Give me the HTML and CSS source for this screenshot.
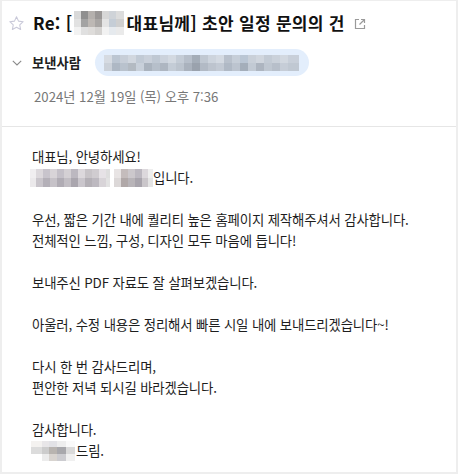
FILE: index.html
```html
<!DOCTYPE html>
<html lang="ko">
<head>
<meta charset="utf-8">
<link rel="stylesheet" href="styles.css">
</head>
<body>
<div class="frame">
  <header class="header">
    <div class="title-row">
      <svg class="star" width="17" height="17" viewBox="0 0 24 24"><path d="M12 2.6l2.85 6.05 6.6.8-4.88 4.55 1.27 6.55L12 17.3l-5.840 3.25 1.27-6.55L2.55 9.45l6.6-.8z" fill="none" stroke="#c9c9d9" stroke-width="1.5" stroke-linejoin="round"/></svg>
      <h1 class="title">Re: [<span class="blur blur-title"></span>대표님께] 초안 일정 문의의 건</h1>
      <svg class="ext" width="12" height="12" viewBox="0 0 12 12"><path d="M5 1.5H1.5v9h9V7" fill="none" stroke="#9a9a9a" stroke-width="1.2"/><path d="M7 1.5h3.5V5M10.5 1.5L5.5 6.5" fill="none" stroke="#9a9a9a" stroke-width="1.2"/></svg>
    </div>
    <div class="sender-row">
      <svg class="chev" width="10" height="6" viewBox="0 0 10 6"><path d="M0.8 0.8L5 5 9.2 0.8" fill="none" stroke="#8a8a8a" stroke-width="1.1"/></svg>
      <span class="sender-label">보낸사람</span>
      <span class="pill"><span class="blur blur-pill"></span></span>
    </div>
    <div class="date">2024년 12월 19일 (목) 오후 7:36</div>
  </header>
  <main class="body">
    <p>대표님, 안녕하세요!<br><span class="blur blur-name"></span>입니다.</p>
    <p>우선, 짧은 기간 내에 퀄리티 높은 홈페이지 제작해주셔서 감사합니다.<br>전체적인 느낌, 구성, 디자인 모두 마음에 듭니다!</p>
    <p>보내주신 PDF 자료도 잘 살펴보겠습니다.</p>
    <p>아울러, 수정 내용은 정리해서 빠른 시일 내에 보내드리겠습니다~!</p>
    <p>다시 한 번 감사드리며,<br>편안한 저녁 되시길 바라겠습니다.</p>
    <p>감사합니다.<br><span class="blur blur-sign"></span>드림.</p>
  </main>
</div>
</body>
</html>
```
FILE: styles.css
```css
* { box-sizing: border-box; }
html, body { margin: 0; padding: 0; background: #fff; }
body {
  font-family: "Noto Sans CJK KR", "Noto Sans", sans-serif;
  color: #1e1e1e;
}
.frame {
  width: 458px;
  height: 474px;
  border: 2px solid #eeeeee;
  border-top-width: 1px;
  overflow: hidden;
}
.header {
  padding: 7px 0 0 6px;
  height: 126px;
  border-bottom: 1px solid #e6e6e6;
}
.title-row {
  display: flex;
  align-items: center;
  height: 30px;
}
.star { flex: none; margin-right: 8px; margin-top: 1px; }
.title {
  margin: 0;
  font-size: 17px;
  font-weight: 700;
  color: #111;
  line-height: 30px;
  white-space: nowrap;
  letter-spacing: 0.3px;
  display: flex;
  align-items: center;
}
.ext { flex: none; margin-left: 9px; margin-top: 1px; }
.sender-row {
  display: flex;
  align-items: center;
  margin-top: 11px;
  height: 27px;
}
.chev { flex: none; margin-left: 4px; margin-right: 10px; }
.sender-label {
  font-size: 13.3px;
  font-weight: 700;
  color: #1e1e1e;
}
.pill {
  margin-left: 14px;
  height: 27px;
  width: 214px;
  border-radius: 14px;
  background: #e3eefc;
  display: flex;
  align-items: center;
  padding-left: 9px;
}
.date {
  margin-top: 12px;
  margin-left: 26px;
  font-size: 13.2px;
  color: #777;
  line-height: 18px;
}
.body {
  padding: 19px 0 0 30px;
  font-size: 13.4px;
  line-height: 21px;
  letter-spacing: -0.15px;
}
.body p { margin: 0 0 21px 0; }
.blur { display: inline-block; vertical-align: middle; }
.blur-title {
  width: 50px;
  height: 24px;
  margin: 0 3px 0 1px;
  background:
    linear-gradient(90deg, #d9d9d9 0 7px, #8f8f8f 7px 14px, #b4b0ad 14px 21px, #9a9796 21px 28px, #d7d7d7 28px 35px, #cfd3d8 35px 42px, #dcdcdc 42px 50px) 0 0 / 100% 8px no-repeat,
    linear-gradient(90deg, #e2e2e2 0 7px, #a3a3a3 7px 14px, #bdb8b4 14px 21px, #a9a6a4 21px 28px, #e4e4e4 28px 35px, #c5cdd6 35px 42px, #cfcfcf 42px 50px) 0 8px / 100% 8px no-repeat,
    linear-gradient(90deg, #f2f2f2 0 7px, #e0e0e0 7px 14px, #dedcda 14px 21px, #d4d2d0 21px 28px, #f2f2f2 28px 35px, #e6eaee 35px 42px, #eaeaea 42px 50px) 0 16px / 100% 8px no-repeat;
}
.blur-pill {
  width: 195px;
  height: 16px;
  background:
    linear-gradient(90deg, #d6dbe2 0 8px, #bcc6d2 8px 16px, #c7ced8 16px 24px, #d1d7df 24px 32px, #c1cad5 32px 40px, #c9d0da 40px 48px, #bfc8d3 48px 56px, #cbd2dc 56px 64px, #d3d9e1 64px 72px, #c4ccd6 72px 80px, #b7bfca 80px 88px, #a4adb8 88px 96px, #c0c8d2 96px 104px, #cdd4dd 104px 112px, #d4dae2 112px 120px, #b9c1cc 120px 128px, #c6ced8 128px 136px, #bac6d4 136px 144px, #c9d0d9 144px 152px, #d0d6de 152px 160px, #c3cbd5 160px 168px, #cad1da 168px 176px, #d2d8e0 176px 184px, #c8cfd9 184px 195px) 0 0 / 100% 8px no-repeat,
    linear-gradient(90deg, #cbd1d9 0 8px, #aeb8c4 8px 16px, #b9c2cd 16px 24px, #b3bac2 24px 32px, #c8d0da 32px 40px, #aab3be 40px 48px, #b6bfca 48px 56px, #aeb6c1 56px 64px, #c4ccd6 64px 72px, #bcc4ce 72px 80px, #aab2bd 80px 88px, #9aa2ad 88px 96px, #b2bac5 96px 104px, #bdc4ce 104px 112px, #c3cad4 112px 120px, #b0b9c5 120px 128px, #bcc4cf 128px 136px, #a4aeba 136px 144px, #c2cad4 144px 152px, #adb5c0 152px 160px, #bfc7d1 160px 168px, #b7bfca 168px 176px, #c6cdd7 176px 184px, #c0c8d2 184px 195px) 0 8px / 100% 8px no-repeat;
}
.blur-name {
  width: 123px;
  height: 18px;
  margin-left: -2px;
  margin-top: -3px;
  background:
    linear-gradient(90deg, #f0eef0 0 6px, #dcd8dc 6px 13px, #c8c4cc 13px 20px, #d8d4d8 20px 27px, #c4c0c8 27px 34px, #d4d0d4 34px 41px, #bcb8c0 41px 48px, #dcd8dc 48px 55px, #c8c4c8 55px 62px, #d0ccd0 62px 69px, #e6e2e6 69px 76px, #dedede 76px 80px, #fff 80px 84px, #e8e4e4 84px 91px, #c4bcbc 91px 98px, #ccc8cc 98px 105px, #bcb8c0 105px 112px, #dcd8dc 112px 118px, #eeeeee 118px 123px) 0 0 / 100% 9px no-repeat,
    linear-gradient(90deg, #ebe9eb 0 6px, #c9c5cb 6px 13px, #b4b0b8 13px 20px, #c6c2c8 20px 27px, #b0acb4 27px 34px, #c2bec4 34px 41px, #aaa6ae 41px 48px, #cac6cc 48px 55px, #b4b0b6 55px 62px, #bdb9c0 62px 69px, #d8d4d8 69px 76px, #e2e2e2 76px 80px, #fff 80px 84px, #dcd8d8 84px 91px, #b0a8a8 91px 98px, #b8b4b8 98px 105px, #a8a4ac 105px 112px, #cac6ca 112px 118px, #e4e4e4 118px 123px) 0 9px / 100% 9px no-repeat;
}
.blur-sign {
  width: 44px;
  height: 20px;
  margin-left: -1px;
  margin-right: 1px;
  margin-top: -3px;
  background:
    linear-gradient(90deg, #f4f2f0 0 11px, #e8e6e8 11px 18px, #e2e2e6 18px 26px, #eeeeee 26px 35px, #fafafa 35px 44px) 0 0 / 100% 6px no-repeat,
    linear-gradient(90deg, #dcdcdc 0 11px, #cccccc 11px 18px, #b8b4b0 18px 26px, #a8a8ac 26px 35px, #dadada 35px 44px) 0 6px / 100% 7px no-repeat,
    linear-gradient(90deg, #fff 0 11px, #ececec 11px 18px, #d8d4d0 18px 26px, #ccccd0 26px 35px, #f0f0f0 35px 44px) 0 13px / 100% 7px no-repeat;
}
```
